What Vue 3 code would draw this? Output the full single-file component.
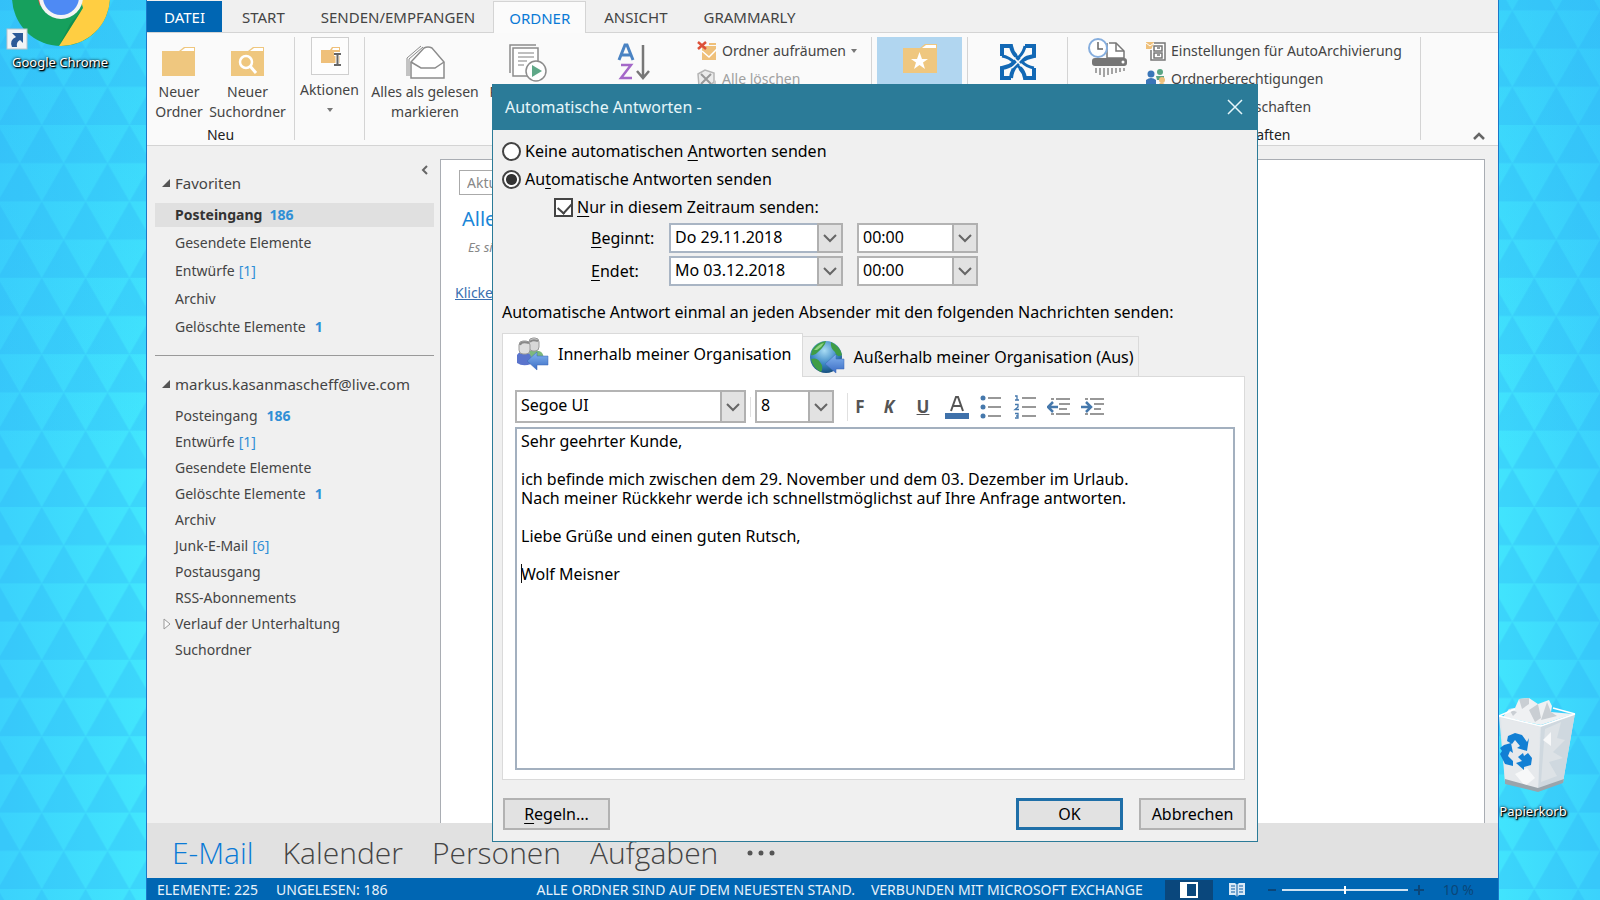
<script setup>
import { ref } from 'vue'

const tabs = ['START', 'SENDEN/EMPFANGEN', 'ORDNER', 'ANSICHT', 'GRAMMARLY']

const favorites = [
  { name: 'Posteingang', count: '186', bold: true, active: true },
  { name: 'Gesendete Elemente' },
  { name: 'Entwürfe', count: '[1]' },
  { name: 'Archiv' },
  { name: 'Gelöschte Elemente', count: '1', bold: true },
]

const folders = [
  { name: 'Posteingang', count: '186', bold: true },
  { name: 'Entwürfe', count: '[1]' },
  { name: 'Gesendete Elemente' },
  { name: 'Gelöschte Elemente', count: '1', bold: true },
  { name: 'Archiv' },
  { name: 'Junk-E-Mail', count: '[6]' },
  { name: 'Postausgang' },
  { name: 'RSS-Abonnements' },
  { name: 'Verlauf der Unterhaltung', expandable: true },
  { name: 'Suchordner' },
]

const modules = ['E-Mail', 'Kalender', 'Personen', 'Aufgaben']

const mode = ref('on')
const limited = ref(true)
const message = ref(
  'Sehr geehrter Kunde,\n\nich befinde mich zwischen dem 29. November und dem 03. Dezember im Urlaub.\nNach meiner Rückkehr werde ich schnellstmöglichst auf Ihre Anfrage antworten.\n\nLiebe Grüße und einen guten Rutsch,\n\nWolf Meisner'
)
</script>

<template>
  <div class="desktop">
    <svg class="wallpaper" aria-hidden="true">
      <defs>
        <linearGradient id="sky" x1="0" y1="0" x2="1" y2="0">
          <stop offset="0" stop-color="#3bd2fc" />
          <stop offset="0.09" stop-color="#42e6fd" />
          <stop offset="0.93" stop-color="#42e6fd" />
          <stop offset="1" stop-color="#3bd2fc" />
        </linearGradient>
        <linearGradient id="shade" x1="0" y1="0" x2="0" y2="1">
          <stop offset="0" stop-color="#2fb9f8" stop-opacity="0.4" />
          <stop offset="0.5" stop-color="#2fb9f8" stop-opacity="0" />
        </linearGradient>
        <pattern id="tri" width="43.9" height="76.4" patternUnits="userSpaceOnUse" patternTransform="translate(41.7 48.6)">
          <path d="M0 0L21.95 38.2H-21.95ZM43.9 0L65.85 38.2H21.95ZM21.95 38.2L43.9 76.4H0Z" fill="#2aa9f3" fill-opacity="0.26" />
        </pattern>
      </defs>
      <rect width="100%" height="100%" fill="url(#sky)" />
      <rect width="100%" height="100%" fill="url(#shade)" />
      <rect width="100%" height="100%" fill="url(#tri)" />
    </svg>

    <a href="#" class="shortcut chrome">
      <svg width="110" height="50" viewBox="0 0 110 50" aria-hidden="true">
        <circle cx="61" cy="-3" r="49" fill="#16a05d" />
        <path d="M83 8L59 46A49 49 0 0 0 110 -3H80Z" fill="#ffce42" />
        <path d="M37 -4L40 6L46 -4Z" fill="#d8503f" />
        <path d="M81 11L59 46L70 24Z" fill="#0c7d43" opacity="0.5" />
        <circle cx="61" cy="-3" r="22" fill="#f4f4f4" />
        <circle cx="61" cy="-3" r="18" fill="#4e8af4" />
        <rect x="7" y="29" width="20" height="20" fill="#f2f4f6" stroke="#b9c4cc" />
        <path d="M12 33H23V43L20 40Q16 42 17 47H12Q9 40 16 37Z" fill="#2c5a98" />
      </svg>
      <span>Google Chrome</span>
    </a>

    <a href="#" class="shortcut bin">
      <svg width="96" height="100" viewBox="0 0 96 100" aria-hidden="true">
        <path d="M8 20L50 30L84 17L72 86L47 95L14 86Z" fill="#dfe5ea" />
        <path d="M50 30L84 17L72 86L47 95Z" fill="#cfd8df" />
        <path d="M12 21L18 13L24 12L28 3L38 2L47 8L58 4L61 10L60 16L82 18L50 29Z" fill="#eff1f3" />
        <path d="M28 3L31 13L38 8L38 2ZM38 14L47 8L50 22L44 26ZM56 6L60 16L66 20L50 24ZM18 13L26 16L22 20Z" fill="#c9ced3" />
        <path d="M10 22L49 31L47 94L14 85Z" fill="#e6e9ec" />
        <path d="M54 33L70 26L66 42L74 44L62 56L72 62L58 66L66 80L50 86Z" fill="#dde2e6" />
        <path d="M24 78L36 72L44 82L34 90ZM52 44L60 36L60 50Z" fill="#f7f8f9" />
        <path d="M14 83L47 92L73 83L72 87L47 96L14 88Z" fill="#9aa4ab" />
        <path d="M8 20L50 30L84 18M8 20L24 13M84 18L62 12" fill="none" stroke="#fff" stroke-width="1.5" />
        <path d="M17 40L24 37L31 39L36 46L38 42L36 55L26 52L29 50L24 44L21 48L16 45ZM13 49L20 47L22 57L19 55L17 60L22 65V70L14 68L9 58L11 55L9 52ZM27 61L32 57L33 60L37 57L41 62L40 69L33 71L33 74L25 67L31 65Z" fill="#117fd4" />
      </svg>
      <span>Papierkorb</span>
    </a>

    <div class="outlook">
      <nav class="tabs">
        <button class="file">DATEI</button>
        <button v-for="t in tabs" :key="t" :class="{ current: t === 'ORDNER' }">{{ t }}</button>
      </nav>

      <div class="ribbon">
        <section class="group neu">
          <div class="tools">
            <button class="big w-a">
              <svg width="36" height="34" viewBox="0 0 36 34"><path d="M1 6H18L23 2H34V31H1Z" fill="#efc77f" /><path d="M20 6L24 3H33V6Z" fill="#fff" /></svg>
              Neuer<br />Ordner
            </button>
            <button class="big w-b">
              <svg width="36" height="34" viewBox="0 0 36 34"><path d="M1 6H18L23 2H34V31H1Z" fill="#efc77f" /><path d="M20 6L24 3H33V6Z" fill="#fff" /><circle cx="16" cy="17" r="6" fill="none" stroke="#fff" stroke-width="2.5" /><path d="M20 21L26 28" stroke="#fff" stroke-width="3" /></svg>
              Neuer<br />Suchordner
            </button>
          </div>
          <h2>Neu</h2>
        </section>
        <section class="group aktionen">
          <button class="big">
            <svg class="boxed" width="38" height="38" viewBox="0 0 38 38"><rect x="0.5" y="0.5" width="37" height="37" fill="#fdfdfd" stroke="#cfcfcf" /><path d="M10 13H19L21 10H29V26H10Z" fill="#efc07a" /><path d="M21 13L22 11H28V13Z" fill="#fff" /><path d="M23 17H30M23 28H30M26.500 17V28" stroke="#fff" stroke-width="4" /><path d="M23 17H30M23 28H30M26.500 17V28" stroke="#666" stroke-width="2" /></svg>
            Aktionen
            <svg width="8" height="20" viewBox="0 0 8 20"><path d="M1 8H7L4 12Z" fill="#777" /></svg>
          </button>
        </section>
        <section class="group clean">
          <button class="big w-c">
            <svg width="40" height="36" viewBox="0 0 40 36"><path d="M6 18L19 4Q23 2 27 4L39 18V34H6Z" fill="#fff" stroke="#8c8c8c" stroke-width="1.500" /><path d="M6 18L16 24H30L39 18" fill="none" stroke="#8c8c8c" stroke-width="1.500" /><path d="M2 32V14L16 2M4 32V15L18 3" fill="none" stroke="#8c8c8c" /></svg>
            Alles als gelesen<br />markieren
          </button>
          <button class="big w-d">
            <svg width="40" height="38" viewBox="0 0 40 38"><path d="M2 30V2H28" fill="none" stroke="#8c8c8c" stroke-width="1.500" /><path d="M5 5H30V33H5Z" fill="#fff" stroke="#8c8c8c" stroke-width="1.500" /><path d="M10 10H26M10 14H26M10 18H19M10 22H16" stroke="#aaa" stroke-width="1.500" /><circle cx="28" cy="28" r="10" fill="#fff" stroke="#8c8c8c" stroke-width="1.500" /><path d="M24 22L34 28L24 34Z" fill="#5fa888" /></svg>
            Regeln jetzt<br />anwenden
          </button>
          <button class="big w-e" aria-label="Alle Ordner von A bis Z anzeigen">
            <svg width="36" height="38" viewBox="0 0 36 38"><path d="M3 17L9 2H11L17 17M5 12H15" fill="none" stroke="#4a83c3" stroke-width="3" /><path d="M5 22H15L5 35H16" fill="none" stroke="#a468c8" stroke-width="2.500" /><path d="M27 2V34M21 28L27 35L33 28" fill="none" stroke="#777" stroke-width="2.500" /></svg>
          </button>
          <div class="list">
            <button>
              <svg width="22" height="22" viewBox="0 0 22 22"><path d="M6 6H20V20H6Z" fill="#efc07a" /><path d="M6 11L13 17L21 9" fill="none" stroke="#fff" stroke-width="1.500" /><path d="M13 4H20" stroke="#efc07a" stroke-width="2" /><path d="M2 2L10 9M10 2L2 9" stroke="#dd5038" stroke-width="2.500" /></svg>
              Ordner aufräumen
              <svg class="drop" width="8" height="20" viewBox="0 0 8 20"><path d="M1 8H7L4 12Z" fill="#777" /></svg>
            </button>
            <button class="disabled" disabled>
              <svg width="22" height="22" viewBox="0 0 22 22"><path d="M2 6L9 2L18 5V14L10 20L3 18Z" fill="#ececec" stroke="#b5b5b5" stroke-width="1.500" /><path d="M5 6L15 16M15 6L5 16" stroke="#999" stroke-width="2" /><path d="M15 18L20 12V20Z" fill="#ccc" /></svg>
              Alle löschen
            </button>
          </div>
        </section>
        <section class="group fav">
          <button class="big" aria-label="In Favoriten anzeigen">
            <svg width="36" height="34" viewBox="0 0 36 34"><path d="M1 6H18L23 2H35V31H1Z" fill="#efc77f" /><path d="M20 6L24 3H34V6Z" fill="#fff" /><path d="M17.500 10L20 17H26L21 20.500L23 27L17.500 23L12 27L14 20.500L9 17H15Z" fill="#fff" /></svg>
          </button>
        </section>
        <section class="group exch">
          <button class="big" aria-label="Exchange">
            <svg width="38" height="38" viewBox="0 0 38 38">
              <g fill="none" stroke="#1268b5" stroke-width="4">
                <path d="M3 13V3H12Q13 9 17 13" />
                <path d="M26 3H35V13Q28 14 22 18Q13 24 12 35" />
                <path d="M35 25V35H26Q25 29 21 25" />
                <path d="M12 35H3V25Q10 24 15 20" />
                <path d="M3 13Q10 14 16 20L22 26" stroke-width="3" />
                <path d="M35 25Q28 24 22 18L16 12" stroke-width="3" />
                <path d="M26 3Q25 9 20 14L13 21" stroke-width="3" />
              </g>
              <path d="M15 15L23 23M25 13L13 25" stroke="#fafafa" stroke-width="1.500" />
            </svg>
          </button>
        </section>
        <section class="group props">
          <div class="tools">
            <button class="big w-f" aria-label="AutoArchivierung">
              <svg width="40" height="40" viewBox="0 0 40 40"><path d="M22 5H29L37 13V20H20V5" fill="#fff" stroke="#777" stroke-width="1.500" /><path d="M29 5V13H37" fill="none" stroke="#777" stroke-width="1.500" /><circle cx="11" cy="10" r="9" fill="#fff" stroke="#86aede" stroke-width="2" /><path d="M11 4V11H16" fill="none" stroke="#666" stroke-width="1.500" /><rect x="5" y="20" width="35" height="8" rx="3" fill="#767676" /><circle cx="36" cy="24" r="1.500" fill="#fff" /><path d="M9 30V35M13 30V37M17 30V39M21 30V37M25 30V36M29 30V35M33 30V34M37 30V33" stroke="#888" stroke-width="1.500" /></svg>
            </button>
            <div class="list">
              <button>
                <svg width="22" height="22" viewBox="0 0 22 22"><path d="M1 2H9V9H1Z" fill="#efc07a" /><path d="M1 3L5 6L9 3" stroke="#fff" fill="none" /><path d="M9 3H20V20H6V10" fill="#fff" stroke="#777" stroke-width="1.500" /><path d="M9 6H17V11H9ZM9 13H17V18H9ZM12 8H15M12 15H15" fill="none" stroke="#777" stroke-width="1.500" /></svg>
                Einstellungen für AutoArchivierung
              </button>
              <button>
                <svg width="22" height="22" viewBox="0 0 22 22"><circle cx="6" cy="6" r="3.500" fill="#3a76b8" /><path d="M1 17V12Q6 8 11 12V17Q6 20 1 17Z" fill="#3a76b8" /><circle cx="15" cy="4" r="3" fill="#5aa583" /><path d="M11 8H19V12H12Z" fill="#5aa583" /><circle cx="17" cy="12" r="3" fill="#efc07a" /><path d="M13 19Q14 14 17 15Q20 15 21 19Z" fill="#efc07a" /></svg>
                Ordnerberechtigungen
              </button>
              <button>
                <svg width="22" height="22" viewBox="0 0 22 22"><path d="M3 4H18V18H3Z" fill="#fff" stroke="#777" /></svg>
                Ordnereigenschaften
              </button>
            </div>
          </div>
          <h2>Eigenschaften</h2>
        </section>
        <button class="fold" aria-label="Menüband reduzieren">
          <svg width="12" height="10" viewBox="0 0 12 10"><path d="M1 8L6 3L11 8" fill="none" stroke="#666" stroke-width="2.500" /></svg>
        </button>
      </div>

      <div class="work">
        <aside>
          <button class="hide" aria-label="Ordnerbereich minimieren">
            <svg width="8" height="10" viewBox="0 0 8 10"><path d="M6 1L2 5L6 9" fill="none" stroke="#666" stroke-width="2" /></svg>
          </button>
          <h3 class="head">
            <svg width="10" height="10" viewBox="0 0 10 10"><path d="M9 1V9H1Z" fill="#555" /></svg>Favoriten
          </h3>
          <ul class="favorites">
            <li v-for="f in favorites" :key="f.name" :class="{ active: f.active }">
              <a href="#">{{ f.name }}<span :class="{ bold: f.bold }">{{ f.count }}</span></a>
            </li>
          </ul>
          <hr />
          <h3 class="head account">
            <svg width="10" height="10" viewBox="0 0 10 10"><path d="M9 1V9H1Z" fill="#555" /></svg>markus.kasanmascheff@live.com
          </h3>
          <ul class="folders">
            <li v-for="f in folders" :key="f.name">
              <svg v-if="f.expandable" width="8" height="12" viewBox="0 0 8 12"><path d="M1 1L7 6L1 11Z" fill="#fafafa" stroke="#999" /></svg>
              <a href="#">{{ f.name }}<span v-if="f.count" :class="{ bold: f.bold }">{{ f.count }}</span></a>
            </li>
          </ul>
        </aside>
        <main>
          <input class="search" type="text" aria-label="Suche" placeholder="Aktuelles Postfach durchsuchen" />
          <p class="filter">Alle</p>
          <p class="empty">Es sind keine Elemente vorhanden.</p>
          <a href="#" class="more">Klicken Sie hier</a>
        </main>
      </div>

      <nav class="modules">
        <a v-for="(m, i) in modules" :key="m" href="#" :class="{ on: i === 0 }">{{ m }}</a>
        <button aria-label="Weitere">
          <svg width="28" height="6" viewBox="0 0 28 6"><circle cx="3" cy="3" r="2.500" /><circle cx="14" cy="3" r="2.500" /><circle cx="25" cy="3" r="2.500" /></svg>
        </button>
      </nav>

      <footer>
        <span class="s-items">ELEMENTE: 225</span>
        <span>UNGELESEN: 186</span>
        <span class="s-sync">ALLE ORDNER SIND AUF DEM NEUESTEN STAND.</span>
        <span class="s-conn">VERBUNDEN MIT MICROSOFT EXCHANGE</span>
        <button class="view on" aria-label="Normal">
          <svg width="18" height="16" viewBox="0 0 18 16"><path d="M1 1H17V15H1Z" fill="none" stroke="#fff" stroke-width="2" /><path d="M1 1H7V15H1Z" fill="#fff" /></svg>
        </button>
        <button class="view" aria-label="Lesen">
          <svg width="18" height="16" viewBox="0 0 18 16"><path d="M1 1H7L9 3L11 1H17V13H11L9 15L7 13H1Z" fill="#d8e8f6" /><path d="M9 3V15M3 4H7M3 7H7M3 10H7M11 4H15M11 7H15M11 10H15" stroke="#0a5da5" /></svg>
        </button>
        <span class="zoom">
          <svg width="8" height="10" viewBox="0 0 8 10"><path d="M0 5H8" stroke="#0b4679" stroke-width="2" /></svg>
          <input type="range" min="10" max="190" value="100" aria-label="Zoom" />
          <svg width="10" height="10" viewBox="0 0 10 10"><path d="M0 5H10M5 0V10" stroke="#0b4679" stroke-width="2" /></svg>
        </span>
        <span class="percent">10 %</span>
      </footer>
    </div>

    <div class="dialog" role="dialog" aria-label="Automatische Antworten">
      <header>
        <h1>Automatische Antworten -</h1>
        <button aria-label="Schließen">
          <svg width="16" height="16" viewBox="0 0 16 16"><path d="M1 1L15 15M15 1L1 15" stroke="#e6f6fa" stroke-width="1.500" /></svg>
        </button>
      </header>
      <div class="body">
        <label class="opt"><input v-model="mode" type="radio" value="off" /><span>Keine automatischen <u>A</u>ntworten senden</span></label>
        <label class="opt"><input v-model="mode" type="radio" value="on" /><span>Au<u>t</u>omatische Antworten senden</span></label>
        <label class="opt inner"><input v-model="limited" type="checkbox" /><span><u>N</u>ur in diesem Zeitraum senden:</span></label>

        <div class="range">
          <label for="from"><u>B</u>eginnt:</label>
          <div class="combo date">
            <select id="from"><option>Do 29.11.2018</option></select>
            <i><svg width="14" height="10" viewBox="0 0 14 10"><path d="M1 2L7 8L13 2" /></svg></i>
          </div>
          <div class="combo time">
            <select aria-label="Beginn Uhrzeit"><option>00:00</option></select>
            <i><svg width="14" height="10" viewBox="0 0 14 10"><path d="M1 2L7 8L13 2" /></svg></i>
          </div>
          <label for="to"><u>E</u>ndet:</label>
          <div class="combo date">
            <select id="to"><option>Mo 03.12.2018</option></select>
            <i><svg width="14" height="10" viewBox="0 0 14 10"><path d="M1 2L7 8L13 2" /></svg></i>
          </div>
          <div class="combo time">
            <select aria-label="Ende Uhrzeit"><option>00:00</option></select>
            <i><svg width="14" height="10" viewBox="0 0 14 10"><path d="M1 2L7 8L13 2" /></svg></i>
          </div>
        </div>

        <p class="hint">Automatische Antwort einmal an jeden Absender mit den folgenden Nachrichten senden:</p>

        <div class="cards" role="tablist">
          <button class="card front" role="tab">
            <svg width="34" height="34" viewBox="0 0 34 34">
              <defs>
                <linearGradient id="arrow" x1="0" y1="0" x2="0" y2="1"><stop offset="0" stop-color="#86b6f0" /><stop offset="1" stop-color="#3a6cc4" /></linearGradient>
                <radialGradient id="globe" cx="0.45" cy="0.3" r="0.7"><stop offset="0" stop-color="#a8dcf4" /><stop offset="0.6" stop-color="#3b87c4" /><stop offset="1" stop-color="#17507f" /></radialGradient>
              </defs>
              <path d="M14 14H24Q29 15 29 24H15Z" fill="#7db87d" />
              <rect x="14" y="1" width="10" height="13" rx="4" fill="#d8d8d8" stroke="#999" />
              <path d="M2 18Q5 13 12 15Q17 16 16 27Q8 30 2 26Z" fill="#5a74cc" />
              <rect x="4" y="4" width="11" height="13" rx="4" fill="#dedede" stroke="#999" />
              <path d="M5 8Q6 4 14 6M15 5Q17 2 23 4" fill="none" stroke="#888" stroke-width="2" />
              <path d="M12 24L22 15V19H33V28H22V33Z" fill="url(#arrow)" stroke="#3a66b4" stroke-width="0.500" />
            </svg>
            Innerhalb meiner Organisation
          </button>
          <button class="card" role="tab">
            <svg width="36" height="34" viewBox="0 0 36 34">
              <circle cx="17" cy="17" r="16" fill="url(#globe)" />
              <path d="M3 10Q8 2 17 1Q16 6 9 12Q6 16 2 15ZM2 19Q8 17 11 22Q15 27 12 32Q4 28 2 19ZM22 2Q31 6 33 15Q28 18 26 12Q21 8 22 2Z" fill="#3f9d45" />
              <path d="M5 10Q10 4 15 3Q13 7 8 10Z" fill="#8ed382" />
              <path d="M16 24L27 14V19H35V29H27V33Z" fill="url(#arrow)" stroke="#3a66b4" stroke-width="0.500" />
            </svg>
            Außerhalb meiner Organisation (Aus)
          </button>
        </div>

        <div class="panel">
          <div class="format">
            <div class="combo font">
              <select aria-label="Schriftart"><option>Segoe UI</option></select>
              <i><svg width="14" height="10" viewBox="0 0 14 10"><path d="M1 2L7 8L13 2" /></svg></i>
            </div>
            <span class="sep"></span>
            <div class="combo size">
              <select aria-label="Schriftgrad"><option>8</option></select>
              <i><svg width="14" height="10" viewBox="0 0 14 10"><path d="M1 2L7 8L13 2" /></svg></i>
            </div>
            <div class="marks">
              <button class="b">F</button>
              <button class="k">K</button>
              <button class="un">U</button>
              <button aria-label="Schriftfarbe"><svg width="24" height="26" viewBox="0 0 24 26"><path d="M6 17L11 3H13L18 17M8 12H16" fill="none" stroke="#555" stroke-width="2" /><path d="M0 19H24V25H0Z" fill="#3f71aa" /></svg></button>
              <button aria-label="Aufzählung"><svg width="24" height="24" viewBox="0 0 24 24"><circle cx="4" cy="3" r="2.500" fill="#4578ac" /><circle cx="4" cy="12" r="2.500" fill="#4578ac" /><circle cx="4" cy="21" r="2.500" fill="#4578ac" /><path d="M9 3H22M9 12H22M9 21H22" stroke="#777" stroke-width="1.500" /></svg></button>
              <button aria-label="Nummerierung"><svg width="24" height="24" viewBox="0 0 24 24"><path d="M2 1H4V5M2 5H6M2 9.500H5V12L2 14.500H6M2 18.500H5V23H2M3 21H5" fill="none" stroke="#4578ac" stroke-width="1.300" /><path d="M9 3H23M9 12H23M9 21H23" stroke="#777" stroke-width="1.500" /></svg></button>
              <button aria-label="Einzug verkleinern"><svg width="24" height="18" viewBox="0 0 24 18"><path d="M4 1H7M9 1H23M12 6H23M12 11H20M4 16H7M9 16H23" stroke="#777" stroke-width="1.500" /><path d="M1 9H11M6 4L1 9L6 14" fill="none" stroke="#4578ac" stroke-width="2.500" /></svg></button>
              <button aria-label="Einzug vergrößern"><svg width="24" height="18" viewBox="0 0 24 18"><path d="M4 1H7M9 1H23M13 6H23M13 11H20M4 16H7M9 16H23" stroke="#777" stroke-width="1.500" /><path d="M0 9H10M5 4L10 9L5 14" fill="none" stroke="#4578ac" stroke-width="2.500" /></svg></button>
            </div>
          </div>
          <div class="editor">
            <textarea v-model="message" aria-label="Nachricht" spellcheck="false"></textarea>
            <span class="caret"></span>
          </div>
        </div>

        <div class="actions">
          <button><u>R</u>egeln...</button>
          <button class="ok">OK</button>
          <button>Abbrechen</button>
        </div>
      </div>
    </div>
  </div>
</template>

<style>
html,
body {
  margin: 0;
  overflow: hidden;
}
</style>

<style scoped>
.desktop {
  position: relative;
  height: 100vh;
  overflow: hidden;
  font-family: 'Noto Sans', 'Open Sans', sans-serif;
  font-size: 14px;
  line-height: 20px;
  color: #444;
}
.desktop * {
  box-sizing: border-box;
}
button,
select,
input,
textarea {
  font: inherit;
  color: inherit;
  margin: 0;
}
button {
  padding: 0;
  border: 0;
  background: none;
}
a {
  color: inherit;
  text-decoration: none;
}
h1,
h2,
h3,
p,
ul {
  margin: 0;
  padding: 0;
  font-weight: 400;
  font-size: inherit;
  list-style: none;
}
svg {
  display: block;
  flex: none;
}
.wallpaper {
  position: absolute;
  inset: 0;
  width: 100%;
  height: 100%;
}
.shortcut {
  position: absolute;
  color: #fff;
  font-size: 13px;
  text-shadow: 1px 1px 2px #000, 0 0 3px #000, 1px 1px 1px #000;
  text-align: center;
}
.chrome {
  left: 0;
  top: 0;
  width: 120px;
}
.chrome span,
.bin span {
  display: block;
}
.chrome span {
  padding-top: 2px;
}
.bin {
  right: 5px;
  top: 696px;
  width: 96px;
}
.bin svg {
  margin-left: -8px;
}
.bin span {
  width: 68px;
  padding-top: 5px;
}

.outlook {
  position: relative;
  display: flex;
  flex-direction: column;
  height: 100%;
  margin: 0 101px 0 146px;
  border: solid #1b78c8;
  border-width: 0 1px;
  background: #f0f0f0;
}
.tabs {
  display: flex;
  height: 33px;
  padding-top: 1px;
  border-bottom: 1px solid #d4d4d4;
  font-size: 15px;
}
.tabs button {
  padding: 0 18px;
}
.tabs .file {
  width: 75px;
  padding: 0;
  background: #0066b3;
  color: #fff;
  margin-right: 2px;
}
.tabs .current {
  height: 32px;
  background: #fbfbfb;
  border: 1px solid #d4d4d4;
  border-bottom: 0;
  padding: 0 15px;
  color: #0a7ad6;
}
.ribbon {
  display: flex;
  height: 113px;
  padding-top: 4px;
  background: #fafafa;
  border-bottom: 1px solid #d4d4d4;
  white-space: nowrap;
}
.group {
  display: flex;
  height: 103px;
  border-right: 1px solid #d4d4d4;
}
.tools {
  display: flex;
}
.neu,
.props {
  flex-direction: column;
  justify-content: space-between;
}
.group h2 {
  text-align: center;
  line-height: 10px;
  color: #222;
}
.big {
  display: flex;
  flex-direction: column;
  align-items: center;
  padding-top: 5px;
}
.big > svg:first-child {
  height: 40px;
}
.neu {
  width: 148px;
}
.w-a {
  width: 64px;
}
.w-b {
  width: 73px;
}
.aktionen {
  width: 70px;
}
.aktionen .big {
  width: 100%;
  padding-top: 0;
}
.aktionen .big > .boxed {
  height: 38px;
  margin-bottom: 5px;
}
.clean {
  width: 507px;
}
.w-c {
  width: 120px;
}
.w-d {
  width: 86px;
}
.w-e {
  width: 125px;
}
.list {
  display: flex;
  flex-direction: column;
}
.list button {
  display: flex;
  align-items: center;
  gap: 4px;
  height: 28px;
}
.list .disabled {
  color: #a0a0a0;
}
.fav {
  width: 96px;
  padding: 0 5px;
}
.fav .big {
  width: 100%;
  background: #b1d6f0;
}
.fav .big svg {
  height: 34px;
}
.exch {
  width: 100px;
}
.exch .big {
  width: 100%;
}
.props {
  width: 353px;
}
.w-f {
  width: 77px;
  padding-top: 1px;
}
.fold {
  align-self: flex-end;
  margin: 0 13px 4px auto;
}

.work {
  flex: 1;
  display: flex;
  min-height: 0;
  padding: 13px 13px 0 0;
}
aside {
  position: relative;
  width: 293px;
  padding: 13px 6px 0 8px;
}
.hide {
  position: absolute;
  right: 11px;
  top: 6px;
}
.head {
  display: flex;
  align-items: center;
  gap: 4px;
  padding-left: 6px;
  height: 22px;
  font-size: 15px;
}
.favorites {
  margin-top: 9px;
}
.favorites li {
  display: flex;
  align-items: center;
  height: 28px;
  padding-left: 20px;
}
.favorites .active {
  height: 24px;
  margin: 2px 0;
  background: #e0e0e0;
  font-weight: 700;
  color: #333;
}
li span {
  margin-left: 4px;
  color: #2f8fd6;
}
li .bold {
  margin-left: 9px;
  font-weight: 700;
}
li.active .bold {
  margin-left: 7px;
}
hr {
  margin: 14px 0 17px;
  border: 0;
  border-top: 1px solid #999;
}
.folders {
  margin-top: 8px;
}
.folders li {
  display: flex;
  align-items: center;
  height: 26px;
  padding-left: 20px;
}
.folders li svg {
  margin: 0 4px 0 -12px;
}
main {
  flex: 1;
  display: flex;
  flex-direction: column;
  align-items: flex-start;
  padding: 10px 18px;
  background: #fff;
  border: 1px solid #a9adb3;
  border-bottom: 0;
}
.search {
  width: 300px;
  height: 25px;
  padding: 0 7px;
  border: 1px solid #aaa;
}
.search::placeholder {
  color: #888;
}
.filter {
  margin: 12px 0 6px 3px;
  font-size: 20px;
  line-height: 24px;
  color: #1a86d8;
}
.empty {
  margin-left: 9px;
  font-size: 13px;
  font-style: italic;
  color: #888;
}
.more {
  margin: 26px 0 0 -4px;
  color: #3a6fb0;
  text-decoration: underline;
}
.modules {
  display: flex;
  align-items: center;
  gap: 29px;
  height: 55px;
  padding: 4px 0 0 25px;
  background: #e1e1e1;
  font-family: 'Open Sans', 'Noto Sans', sans-serif;
  font-size: 30px;
  font-weight: 300;
  line-height: 40px;
}
.modules .on {
  color: #0a7ad6;
}
.modules svg {
  fill: #555;
}
footer {
  display: flex;
  align-items: center;
  height: 22px;
  padding: 2px 0 0 10px;
  background: #0066b3;
  color: #e8f2fa;
  font-size: 14px;
  white-space: nowrap;
}
.s-items {
  margin-right: 18px;
}
.s-sync {
  margin-left: auto;
}
.s-conn {
  margin: 0 22px 0 16px;
}
.view {
  display: grid;
  place-items: center;
  width: 48px;
  height: 20px;
}
.view.on {
  background: #0a477c;
}
.zoom {
  display: flex;
  align-items: center;
  gap: 6px;
  margin-left: 7px;
}
.zoom input {
  appearance: none;
  width: 126px;
  height: 2px;
  background: #cfe2f2;
}
.zoom input::-webkit-slider-thumb {
  appearance: none;
  width: 2px;
  height: 8px;
  background: #fff;
}
.percent {
  margin: 0 24px 0 19px;
  color: #0b4679;
}

.dialog {
  position: absolute;
  left: 492px;
  top: 84px;
  width: 766px;
  background: #f0f0f0;
  border: 1px solid #2b7b98;
  color: #000;
  font-size: 16px;
  white-space: nowrap;
}
.dialog header {
  display: flex;
  align-items: center;
  justify-content: space-between;
  height: 45px;
  padding: 0 14px 2px 12px;
  background: #2b7b98;
  color: #e6f6fa;
}
.body {
  padding: 7px 11px 11px 9px;
}
.opt {
  display: flex;
  align-items: center;
  gap: 4px;
  height: 28px;
}
.opt input {
  appearance: none;
  width: 19px;
  height: 19px;
  border: 2px solid #444;
  border-radius: 50%;
  background: #fff;
}
.opt input:checked {
  background: radial-gradient(circle, #333 5px, #fff 6px);
}
.opt.inner {
  padding-left: 52px;
}
.opt.inner input {
  border-radius: 0;
}
.opt.inner input:checked {
  background: #fff;
}
.opt.inner input:checked::before {
  content: '';
  display: block;
  width: 12px;
  height: 7px;
  margin: 2px 0 0 2px;
  border: solid #444;
  border-width: 0 0 2px 2px;
  rotate: -48deg;
}
u {
  text-underline-offset: 3px;
}
.range {
  display: grid;
  grid-template-columns: 78px 174px 135px;
  row-gap: 3px;
  align-items: center;
  padding-left: 89px;
  margin-top: 2px;
}
.range .time {
  margin-left: 14px;
}
.combo {
  display: grid;
  grid-template-columns: 1fr 26px;
  height: 30px;
}
.combo select {
  grid-area: 1 / 1 / 2 / 3;
  appearance: none;
  padding: 0 0 2px 4px;
  border: 2px solid #b4b4b4;
  border-radius: 0;
  background: #fff;
}
.combo.date select {
  border-color: #a9b5c4;
}
.combo i {
  grid-area: 1 / 2;
  display: grid;
  place-items: center;
  background: #e2e2e2;
  border: 2px solid #b0b0b0;
  pointer-events: none;
}
.combo path {
  fill: none;
  stroke: #666;
  stroke-width: 2;
}
.hint {
  margin-top: 16px;
}
.cards {
  display: flex;
  align-items: flex-end;
  margin-top: 11px;
}
.card {
  display: flex;
  align-items: center;
  gap: 9px;
  height: 40px;
  padding: 0 4px 0 6px;
  border: 1px solid #dadada;
  border-bottom: 0;
  border-left: 0;
}
.front {
  position: relative;
  height: 44px;
  margin-bottom: -1px;
  padding: 0 10px 4px 12px;
  border-left: 1px solid #dadada;
  background: #fff;
}
.panel {
  margin-right: 1px;
  padding: 13px 9px;
  background: #fff;
  border: 1px solid #dadada;
}
.format {
  display: flex;
  align-items: center;
  margin-left: 3px;
}
.format .combo {
  height: 33px;
}
.format .combo select {
  padding-bottom: 4px;
}
.sep {
  width: 1px;
  height: 20px;
  margin: 0 4px;
  background: #e0e0e0;
}
.font {
  width: 231px;
}
.size {
  width: 79px;
}
.marks {
  display: flex;
  align-items: center;
  margin-left: 13px;
  border-left: 1px solid #e0e0e0;
  color: #555;
}
.marks button {
  display: grid;
  place-items: center;
  width: 34px;
  height: 28px;
  font-weight: 700;
  font-size: 17px;
}
.marks .b {
  width: 24px;
}
.marks .k {
  font-style: italic;
}
.marks .un {
  text-decoration: underline;
}
.editor {
  position: relative;
  margin: 4px 0 -4px 3px;
}
textarea {
  display: block;
  width: 100%;
  height: 343px;
  padding: 3px 4px;
  border: 2px solid #a3b0bf;
  outline: 0;
  resize: none;
  line-height: 19px;
}
.caret {
  position: absolute;
  left: 6px;
  top: 137px;
  width: 1px;
  height: 19px;
  background: #111;
}
.actions {
  display: flex;
  gap: 16px;
  margin: 18px 0 0 1px;
}
.actions button {
  width: 107px;
  height: 32px;
  background: #e2e2e2;
  border: 2px solid #b2b2b2;
}
.actions .ok {
  margin-left: auto;
  border: 3px solid #1f6fa8;
}
</style>
